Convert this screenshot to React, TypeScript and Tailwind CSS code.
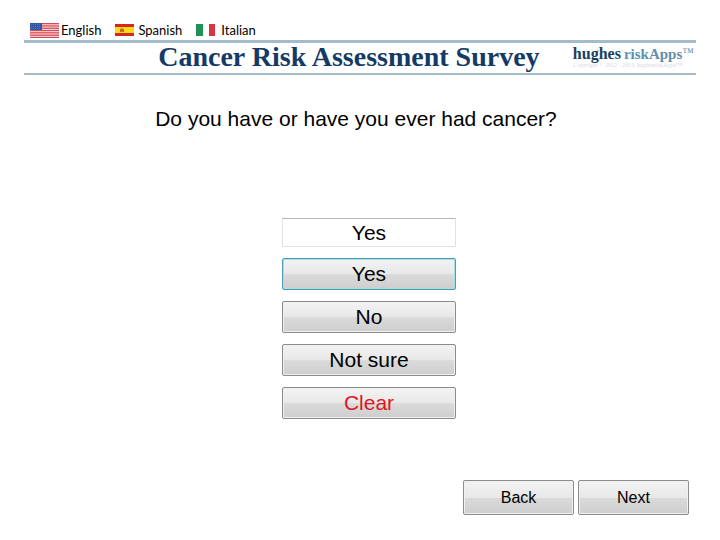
import { clsx } from "clsx";
import type { ReactNode } from "react";

function FlagUS() {
  return (
    <svg viewBox="0 0 29 15" className="h-[15px] w-[29px]" aria-hidden="true">
      <rect width="29" height="15" fill="#f8e6e6" />
      {[0, 1, 2, 3, 4, 5, 6].map((i) => (
        <rect key={i} y={i * 2.3} width="29" height="1.3" fill="#d64a55" />
      ))}
      <rect width="12" height="7" fill="#3558a4" />
      {[1.5, 3.5, 5.5].map((y) => (
        <path key={y} d={`M1 ${y}h10`} stroke="#7089c0" strokeWidth="0.6" strokeDasharray="0.8 1.2" />
      ))}
    </svg>
  );
}

function FlagSpain() {
  return (
    <svg viewBox="0 0 19 12" className="h-[12px] w-[19px]" aria-hidden="true">
      <rect width="19" height="12" fill="#d5281f" />
      <rect y="3" width="19" height="6" fill="#ffd91a" />
      <path d="M5 7.8V5.6l1.6-1.4L9 5.6v2.2z" fill="#b5561c" />
      <path d="M6.4 5.6h1v1.2h-1z" fill="#e8b23a" />
    </svg>
  );
}

function FlagItaly() {
  return (
    <svg viewBox="0 0 19 12" className="h-[12px] w-[19px]" aria-hidden="true">
      <rect width="19" height="12" fill="#fff" />
      <rect width="7" height="12" fill="#1f9150" />
      <rect x="13" width="6" height="12" fill="#d9343f" />
    </svg>
  );
}

function LanguageLink({ flag, gap, children }: { flag: ReactNode; gap: string; children: ReactNode }) {
  return (
    <a href="#" className={clsx("flex items-center", gap)}>
      {flag}
      <span>{children}</span>
    </a>
  );
}

function Logo() {
  return (
    <div className="shrink-0 pr-0.5 pb-0.5 font-['Liberation_Serif',serif]">
      <div className="flex items-baseline leading-4 font-bold">
        <span className="pr-[3px] text-[16px] text-[#173f5f]">hughes</span>
        <span className="text-[15px] text-[#5f8fae]">riskApps</span>
        <span className="self-start text-[12px] leading-3 font-normal text-[#5f8fae]">™</span>
      </div>
      <div className="pr-3 text-center text-[6px] leading-[6px] text-[#d3dade]">
        Copyright © 2012 - 2013, hughesriskApps™
      </div>
    </div>
  );
}

const face =
  "rounded-[2px] border bg-[linear-gradient(#f3f3f3,#e8e8e8_50%,#dadada_52%,#cecece)]";
const idle = "border-[#8c8c8c] shadow-[inset_0_0_0_1px_#f0f0f0]";

function AnswerButton({ selected, danger, children }: { selected?: boolean; danger?: boolean; children: ReactNode }) {
  return (
    <button
      type="button"
      className={clsx(
        face,
        "h-8 w-full text-[21px] leading-6",
        selected ? "border-[#4a9fb5] shadow-[inset_0_0_0_1px_#a9dcea]" : idle,
        danger && "text-[#e0141c]"
      )}
    >
      {children}
    </button>
  );
}

function NavButton({ children }: { children: ReactNode }) {
  return (
    <button type="button" className={clsx(face, idle, "h-[35px] w-[111px] text-[16px] leading-6")}>
      {children}
    </button>
  );
}

export default function App() {
  return (
    <div className="flex min-h-screen flex-col bg-white px-6 pt-[20px] pb-[25px] font-['Liberation_Sans',Arial,sans-serif] text-black">
      <nav className="flex h-5 items-center gap-3.5 pl-[6px] font-['Lato',sans-serif] text-[13px] leading-5">
        <LanguageLink flag={<FlagUS />} gap="gap-0.5">English</LanguageLink>
        <LanguageLink flag={<FlagSpain />} gap="gap-1">Spanish</LanguageLink>
        <LanguageLink flag={<FlagItaly />} gap="gap-1.5">Italian</LanguageLink>
      </nav>

      <header className="flex h-[35px] items-center border-t-[3px] border-b-2 border-[#a3bccb] pl-[101px]">
        <h1 className="flex-1 pb-0.5 text-center font-['Liberation_Serif',serif] text-[28px] leading-7 font-bold whitespace-nowrap text-[#143a66]">
          Cancer Risk Assessment Survey
        </h1>
        <Logo />
      </header>

      <main className="flex flex-1 flex-col items-center">
        <h2 className="mt-8 pr-2 text-[21px] leading-6">
          <label htmlFor="answer">Do you have or have you ever had cancer?</label>
        </h2>
        <div className="mt-[87px] ml-[18px] flex w-[174px] flex-col gap-[11px]">
          <input
            id="answer"
            readOnly
            defaultValue="Yes"
            className="h-[29px] w-full border border-[#e2e2e2] border-t-[#b5b5b5] bg-white text-center text-[21px] outline-none"
          />
          <AnswerButton selected>Yes</AnswerButton>
          <AnswerButton>No</AnswerButton>
          <AnswerButton>Not sure</AnswerButton>
          <AnswerButton danger>Clear</AnswerButton>
        </div>
      </main>

      <footer className="flex justify-end gap-1 pr-[7px]">
        <NavButton>Back</NavButton>
        <NavButton>Next</NavButton>
      </footer>
    </div>
  );
}
